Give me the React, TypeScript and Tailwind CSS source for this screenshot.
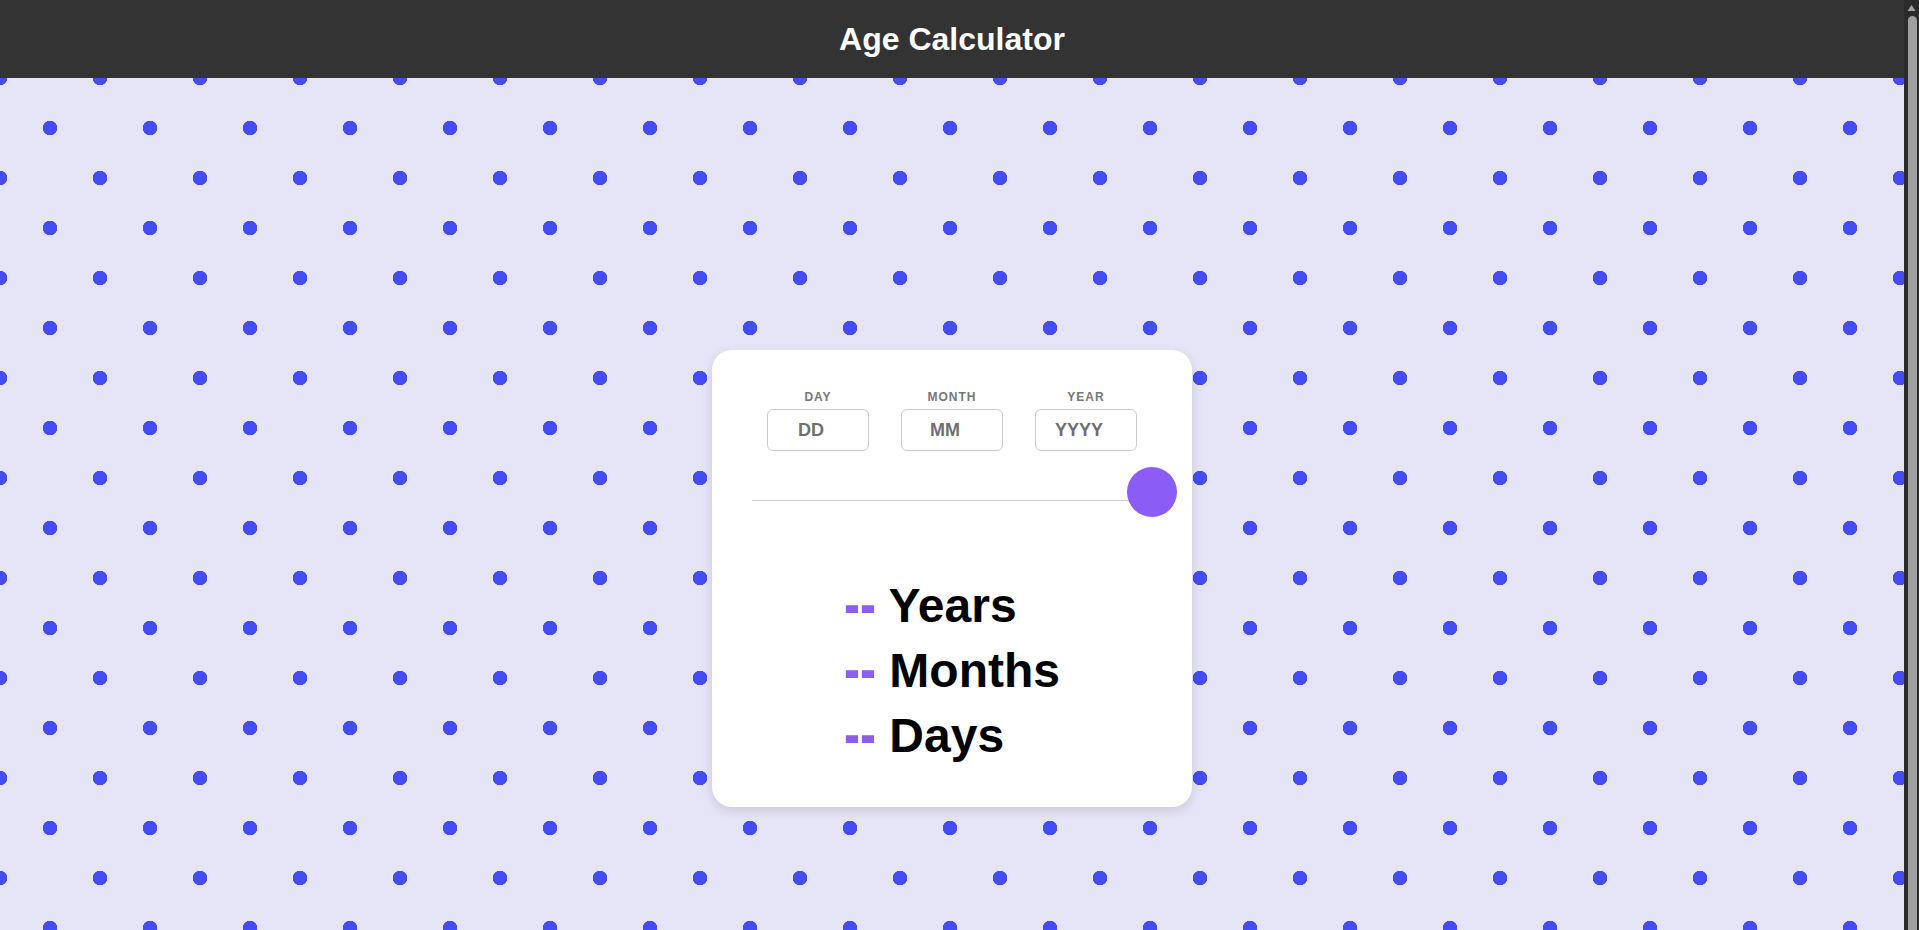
import React from 'react';

const fields = [
  { label: 'DAY', placeholder: 'DD' },
  { label: 'MONTH', placeholder: 'MM' },
  { label: 'YEAR', placeholder: 'YYYY' },
];

const results = ['Years', 'Months', 'Days'];

function ScrollBar() {
  return (
    <div className="sticky top-0 self-start h-screen w-[15px] shrink-0 bg-[#2b2b2b] flex flex-col items-center pt-[4px]">
      <svg width="9" height="8" viewBox="0 0 9 8" className="mb-[4px]">
        <path d="M4.5 1 L8.5 7 L0.5 7 Z" fill="#a3a3a3" />
      </svg>
      <div className="flex-1 w-[9px] ml-[1px] rounded-t-[5px] bg-[#9f9f9f]" />
    </div>
  );
}

export default function App() {
  return (
    <div className="flex font-['Liberation_Sans',Arial,sans-serif]">
      <div className="flex-1 min-w-0 min-h-[960px] bg-[#e5e5f7] [background-image:radial-gradient(circle,#444cf7_7px,transparent_7.5px),radial-gradient(circle,#444cf7_7px,transparent_7.5px)] [background-size:100px_100px] [background-position:50px_28px,0px_78px]">
        <header className="h-[78px] bg-[#333333] flex items-center justify-center">
          <h1 className="text-[32px] font-bold text-white">Age Calculator</h1>
        </header>

        <main className="flex justify-center pt-[272px] pb-[100px]">
          <div className="w-[480px] bg-white rounded-[20px] px-10 pt-10 pb-[39px] shadow-[0_4px_12px_rgba(0,0,0,0.12)]">
            <div className="flex justify-center gap-[32px]">
              {fields.map((f) => (
                <div key={f.label} className="flex flex-col items-center">
                  <label className="text-[12px] leading-[14px] font-bold tracking-[1px] text-[#777] mb-[5px]">
                    {f.label}
                  </label>
                  <input
                    placeholder={f.placeholder}
                    className="w-[102px] h-[42px] border border-[#cccccc] rounded-[6px] text-center pr-[14px] text-[18px] font-bold text-[#333] placeholder:text-[#6f6f6f] placeholder:font-bold outline-none"
                  />
                </div>
              ))}
            </div>

            <div className="relative mt-[49px] h-px bg-[#cccccc]">
              <button className="absolute right-[-25px] top-[-33px] w-[50px] h-[50px] rounded-full bg-[#8b5cf6]" />
            </div>

            <div className="mt-[72px] w-fit mx-auto flex flex-col items-start">
              {results.map((r) => (
                <p key={r} className="text-[48px] leading-[65px] font-bold text-black whitespace-pre">
                  <span className="inline-block origin-[50%_37px] scale-y-[1.35] text-[#8b5cf6]">--</span> {r}
                </p>
              ))}
            </div>
          </div>
        </main>
      </div>
      <ScrollBar />
    </div>
  );
}
